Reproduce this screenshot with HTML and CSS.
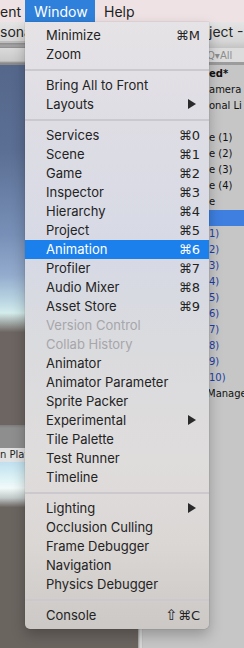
FILE: index.html
```html
<!DOCTYPE html>
<html lang="en">
<head>
  <meta charset="UTF-8" />
  <meta name="viewport" content="width=device-width, initial-scale=1.0"/>
  <title>Window menu</title>
  <link rel="stylesheet" href="styles.css">
</head>
<body>
  <div class="screen">
    <div class="menubar">
      <span class="mb-item mb-first">ent</span>
      <span class="mb-item mb-active">Window</span>
      <span class="mb-item">Help</span>
    </div>

    <div class="titlebar">
      <span class="title-left">sonal</span>
      <span class="title-right">ject - PC</span>
    </div>

    <div class="editor">
      <div class="left-col">
        <div class="tabstrip"></div>
        <div class="scene-toolbar"></div>
        <div class="scene-sky"></div>
        <div class="scene-ground"></div>
        <div class="game-tabs"></div>
        <div class="game-toolbar">n Play</div>
        <div class="game-sky"></div>
        <div class="game-ground"></div>
      </div>
      <div class="splitter"></div>
      <div class="hierarchy">
        <div class="h-tabstrip"></div>
        <div class="h-search"><span class="h-search-box">Q▾All</span></div>
        <div class="h-list">
          <div class="h-row h-scene">ed*</div>
          <div class="h-row">amera</div>
          <div class="h-row">onal Li</div>
          <div class="h-row"></div>
          <div class="h-row">e (1)</div>
          <div class="h-row">e (2)</div>
          <div class="h-row">e (3)</div>
          <div class="h-row">e (4)</div>
          <div class="h-row">e</div>
          <div class="h-row h-selected"></div>
          <div class="h-row h-prefab">1)</div>
          <div class="h-row h-prefab">2)</div>
          <div class="h-row h-prefab">3)</div>
          <div class="h-row h-prefab">4)</div>
          <div class="h-row h-prefab">5)</div>
          <div class="h-row h-prefab">6)</div>
          <div class="h-row h-prefab">7)</div>
          <div class="h-row h-prefab">8)</div>
          <div class="h-row h-prefab">9)</div>
          <div class="h-row h-prefab">10)</div>
          <div class="h-row h-cut">Manage</div>
        </div>
      </div>
    </div>

    <div class="menu">
      <div class="item"><span>Minimize</span><span class="key">⌘M</span></div>
      <div class="item"><span>Zoom</span></div>
      <div class="sep"></div>
      <div class="item"><span>Bring All to Front</span></div>
      <div class="item"><span>Layouts</span><span class="arrow"></span></div>
      <div class="sep"></div>
      <div class="item"><span>Services</span><span class="key">⌘0</span></div>
      <div class="item"><span>Scene</span><span class="key">⌘1</span></div>
      <div class="item"><span>Game</span><span class="key">⌘2</span></div>
      <div class="item"><span>Inspector</span><span class="key">⌘3</span></div>
      <div class="item"><span>Hierarchy</span><span class="key">⌘4</span></div>
      <div class="item"><span>Project</span><span class="key">⌘5</span></div>
      <div class="item selected"><span>Animation</span><span class="key">⌘6</span></div>
      <div class="item"><span>Profiler</span><span class="key">⌘7</span></div>
      <div class="item"><span>Audio Mixer</span><span class="key">⌘8</span></div>
      <div class="item"><span>Asset Store</span><span class="key">⌘9</span></div>
      <div class="item disabled"><span>Version Control</span></div>
      <div class="item disabled"><span>Collab History</span></div>
      <div class="item"><span>Animator</span></div>
      <div class="item"><span>Animator Parameter</span></div>
      <div class="item"><span>Sprite Packer</span></div>
      <div class="item"><span>Experimental</span><span class="arrow"></span></div>
      <div class="item"><span>Tile Palette</span></div>
      <div class="item"><span>Test Runner</span></div>
      <div class="item"><span>Timeline</span></div>
      <div class="sep"></div>
      <div class="item"><span>Lighting</span><span class="arrow"></span></div>
      <div class="item"><span>Occlusion Culling</span></div>
      <div class="item"><span>Frame Debugger</span></div>
      <div class="item"><span>Navigation</span></div>
      <div class="item"><span>Physics Debugger</span></div>
      <div class="sep"></div>
      <div class="item"><span>Console</span><span class="key"><span class="shift">⇧</span>⌘C</span></div>
    </div>
  </div>
</body>
</html>
```

FILE: styles.css
```css
* {
  box-sizing: border-box;
  margin: 0;
  padding: 0;
}

body {
  width: 244px;
  height: 648px;
  overflow: hidden;
  background: #6b6560;
  font-family: 'Inter', 'DejaVu Sans', sans-serif;
}

.screen {
  position: relative;
  width: 244px;
  height: 648px;
  display: flex;
  flex-direction: column;
}

/* top menu bar */
.menubar {
  height: 22px;
  display: flex;
  align-items: stretch;
  background: #efe2e4;
  font-size: 14px;
  color: #222;
}

.mb-item {
  display: flex;
  align-items: center;
  padding: 0 9px;
}

.mb-first {
  width: 25px;
  padding: 0;
}

.mb-active {
  width: 70px;
  background: #2e80da;
  color: #fff;
}

/* window title */
.titlebar {
  height: 19px;
  display: flex;
  align-items: center;
  background: linear-gradient(#e4e4e4, #d6d6d6);
  font-size: 14px;
  color: #262626;
  white-space: nowrap;
  overflow: hidden;
}

.title-left {
  flex: none;
  width: 209px;
  overflow: hidden;
}

.title-right {
  flex: none;
}

/* editor panels */
.editor {
  flex: 1;
  display: flex;
}

.left-col {
  width: 138px;
  display: flex;
  flex-direction: column;
}

.tabstrip {
  height: 7px;
  background: linear-gradient(#bdbdbd 0, #bdbdbd 2px, #8c8c8c 2px, #a6a6a6 5px, #8a8a8a 7px);
}

.scene-toolbar {
  height: 17px;
  background: linear-gradient(#dadada, #c9c9c9 13px, #8a8a8a 15px, #8a8a8a 17px);
}

.scene-sky {
  height: 267px;
  background: linear-gradient(#55688c 0, #5b6e93 85px, #7890b7 170px, #93abcd 210px, #b9d4e2 235px, #d3ecec 248px, #aab4b2 256px, #6e6763 267px);
}

.scene-ground {
  height: 93px;
  background: #6c6561;
}

.game-tabs {
  height: 23px;
  background: linear-gradient(#7d7d7d, #8e8e8e 3px, #8e8e8e);
}

.game-toolbar {
  height: 14px;
  background: #e2e2e2;
  font-family: 'DejaVu Sans', sans-serif;
  font-size: 10px;
  line-height: 14px;
  color: #222;
  white-space: nowrap;
}

.game-sky {
  height: 45px;
  background: linear-gradient(#bfe0f0, #e0f4f6 18px, #f2fafa 26px, #c0c8c8 36px, #6e6864 45px);
}

.game-ground {
  flex: 1;
  background: #6b6560;
}

.splitter {
  width: 5px;
  background: linear-gradient(90deg, #9a9a9a, #d6d6d6 2px, #d6d6d6 4px, #a8a8a8);
}

.hierarchy {
  flex: 1;
  display: flex;
  flex-direction: column;
  background: #c6c6c6;
  font-family: 'DejaVu Sans', sans-serif;
  font-size: 10px;
  white-space: nowrap;
  overflow: hidden;
}

.h-tabstrip {
  height: 7px;
  background: linear-gradient(#d6d6d6, #c4c4c4);
}

.h-search {
  height: 14px;
  display: flex;
  align-items: center;
  background: #dcdcdc;
  padding-left: 64px;
}

.h-search-box {
  color: #8c8c8c;
  font-size: 10px;
}

.h-list {
  border-top: 3px solid #9c9c9c;
  padding-top: 1px;
}

.h-row {
  height: 16px;
  line-height: 16px;
  padding-left: 66px;
  color: #111;
}

.h-scene {
  font-weight: bold;
}

.h-selected {
  background: #3e7fe0;
}

.h-prefab {
  color: #1c3ea8;
}

.h-cut {
  padding-left: 64px;
}

/* dropdown menu */
.menu {
  position: absolute;
  top: 22px;
  left: 25px;
  width: 184px;
  padding: 4px 0;
  border-radius: 0 0 5px 5px;
  background: linear-gradient(#e6e3e6 0, #dedde4 100px, #d6d9e5 230px, #dadbde 320px, #dfdcdc 440px, #dbd7d5 520px, #ccc8c5 100%);
  box-shadow: 0 0 1px rgba(0, 0, 0, 0.45), 0 6px 14px rgba(0, 0, 0, 0.25);
  font-size: 13px;
  color: #232323;
}

.item {
  height: 19px;
  display: flex;
  align-items: center;
  justify-content: space-between;
  padding: 0 9px 1px 21px;
}

.item.selected {
  background: #1c80ec;
  color: #fff;
}

.item.disabled {
  color: #a7a6aa;
}

.key {
  font-family: 'DejaVu Sans', sans-serif;
  font-size: 13px;
}

.shift {
  font-size: 15px;
  line-height: 13px;
}

.arrow {
  width: 0;
  height: 0;
  margin-right: 4px;
  border-top: 5px solid transparent;
  border-bottom: 5px solid transparent;
  border-left: 8px solid #2a2a2a;
}

.sep {
  height: 12px;
  display: flex;
  align-items: center;
}

.sep::after {
  content: '';
  flex: 1;
  height: 2px;
  background: #cbc9cd;
}
```
